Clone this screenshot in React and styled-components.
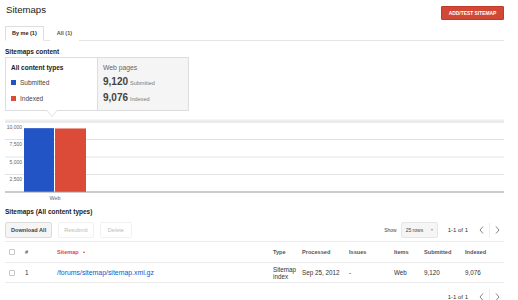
import React from 'react';
import styled, { createGlobalStyle } from 'styled-components';

const GlobalStyle = createGlobalStyle`
  html, body { margin: 0; padding: 0; background: #fff; }
  body { font-family: "Liberation Sans", Arial, sans-serif; color: #222; }
  * { box-sizing: border-box; }
`;

const FONT = '"Liberation Sans", Arial, sans-serif';

const Page = styled.div`
  width: 518px;
  height: 300px;
  overflow: hidden;
  padding: 0 14px 0 5px;
`;

const Header = styled.header`
  display: flex;
  justify-content: space-between;
  align-items: flex-start;
  height: 26px;
  padding-top: 4px;
`;

const Title = styled.h1`
  margin: 0;
  padding-left: 1px;
  font-size: 9.6px;
  line-height: 12px;
  font-weight: normal;
  color: #222;
`;

const PrimaryButton = styled.button`
  margin-top: 2px;
  height: 14px;
  width: 63px;
  padding: 0;
  background: #d14836;
  border: 1px solid #c23a28;
  border-radius: 1px;
  color: #fff;
  font: bold 4.9px ${FONT};
  text-transform: uppercase;
  white-space: nowrap;
`;

const TabBar = styled.div`
  display: flex;
  height: 15px;
  border-bottom: 1px solid #e5e5e5;
`;

const Tab = styled.div`
  height: 15px;
  padding: 0 6px;
  margin-right: 6px;
  font-size: 5.5px;
  font-weight: bold;
  line-height: 13px;
  color: ${p => (p.$active ? '#222' : '#555')};
  border: 1px solid ${p => (p.$active ? '#ddd' : 'transparent')};
  border-bottom: 1px solid ${p => (p.$active ? '#fff' : 'transparent')};
  background: #fff;
`;

const SectionTitle = styled.h2`
  margin: 0;
  padding-top: ${p => p.$top}px;
  font-size: 6.5px;
  line-height: 10px;
  font-weight: bold;
  color: #222;
`;

const Summary = styled.div`
  display: flex;
  width: 184px;
  height: 54px;
  border: 1px solid #ddd;
`;

const LegendPanel = styled.div`
  position: relative;
  width: 91px;
  padding: 4px 0 0 5px;
  background: #fff;

  &::before,
  &::after {
    content: '';
    position: absolute;
    left: 41px;
    width: 0;
    height: 0;
    border-left: 5px solid transparent;
    border-right: 5px solid transparent;
  }
  &::before {
    bottom: -7px;
    border-top: 6px solid #ddd;
  }
  &::after {
    bottom: -5.6px;
    border-top: 6px solid #fff;
  }
`;

const PanelHeading = styled.div`
  font-size: ${p => (p.$muted ? '6.8px' : '6.5px')};
  font-weight: ${p => (p.$muted ? 'normal' : 'bold')};
  color: ${p => (p.$muted ? '#666' : '#222')};
  line-height: 12px;
`;

const LegendItem = styled.div`
  display: flex;
  align-items: center;
  gap: 4px;
  height: 16px;
  font-size: 6.5px;
  color: #444;
`;

const Swatch = styled.span`
  width: 5px;
  height: 5px;
  background: ${p => p.$color};
`;

const StatsPanel = styled.div`
  flex: 1;
  padding: 4px 0 0 5px;
  background: #f5f5f5;
  border-left: 1px solid #ddd;
`;

const StatRow = styled.div`
  display: flex;
  align-items: baseline;
  gap: 2px;
  height: 16px;
  line-height: 15px;
`;

const BigNum = styled.span`
  font-size: 10px;
  font-weight: bold;
  color: #444;
`;

const StatLabel = styled.span`
  font-size: 5.5px;
  color: #777;
`;

const ChartWrap = styled.div`
  margin-top: 8px;
  height: 84px;
`;

const Toolbar = styled.div`
  display: flex;
  justify-content: space-between;
  align-items: center;
  margin-top: 5px;
  height: 16px;
`;

const ButtonGroup = styled.div`
  display: flex;
  gap: 6px;
  height: 16px;
`;

const ActionButton = styled.button`
  min-width: 32px;
  height: 16px;
  padding: 0 5px;
  border-radius: 2px;
  border: 1px solid ${p => (p.disabled ? '#f1f1f1' : '#dcdcdc')};
  background: ${p => (p.disabled ? '#fff' : '#f5f5f5')};
  color: ${p => (p.disabled ? '#bbb' : '#444')};
  font: ${p => (p.disabled ? 'normal' : 'bold')} 5.6px ${FONT};
  white-space: nowrap;
`;

const Pager = styled.div`
  display: flex;
  align-items: center;
  justify-content: flex-end;
  height: 15px;
  margin-top: ${p => p.$top || 0}px;
`;

const ShowLabel = styled.span`
  font-size: 5px;
  color: #444;
  margin-right: 4px;
`;

const RowsSelect = styled.div`
  display: flex;
  align-items: center;
  justify-content: space-between;
  width: 37px;
  height: 16px;
  padding: 0 4px;
  margin-right: 10px;
  background: #f5f5f5;
  border: 1px solid #e6e6e6;
  border-radius: 2px;
  font-size: 5px;
  color: #444;
`;

const Caret = styled.span`
  width: 0;
  height: 0;
  border-left: 1.5px solid transparent;
  border-right: 1.5px solid transparent;
  border-top: 2px solid #999;
`;

const RangeText = styled.span`
  font-size: 6px;
  color: #333;
  margin-right: 6px;
`;

const NavGroup = styled.div`
  display: flex;
  align-items: center;
  height: 15px;
`;

const NavButton = styled.button`
  display: flex;
  align-items: center;
  justify-content: center;
  width: 15px;
  height: 15px;
  padding: 0;
  background: none;
  border: none;
  border-left: ${p => (p.$divided ? '1px solid #eee' : 'none')};
`;

const Table = styled.div`
  margin-top: 3px;
  border-top: 1px solid #ececec;
`;

const Row = styled.div`
  display: grid;
  grid-template-columns: 20px 32px 216px 29px 47px 45px 30px 41px 39px;
  align-items: center;
  height: ${p => (p.$head ? 21 : 20)}px;
  border-bottom: 1px solid #ebebeb;
`;

const HeadCell = styled.div`
  font-size: 5.6px;
  font-weight: bold;
  color: ${p => (p.$sorted ? '#dd4b39' : '#555')};
  display: flex;
  align-items: center;
  gap: 4px;
`;

const Cell = styled.div`
  font-size: 6.3px;
  line-height: 7px;
  color: #333;
`;

const Link = styled.a`
  font-size: 6.9px;
  color: #1155cc;
  text-decoration: none;
`;

const CheckBox = styled.span`
  display: block;
  margin-left: 4px;
  width: 6px;
  height: 6px;
  border: 1px solid #c6c6c6;
  border-radius: 1px;
  background: #fff;
`;

const SortArrow = styled.span`
  width: 0;
  height: 0;
  border-left: 1.5px solid transparent;
  border-right: 1.5px solid transparent;
  border-bottom: 2px solid #dd4b39;
`;

const Chevron = ({ dir }) => (
  <svg width="5" height="8" viewBox="0 0 5 8">
    <polyline
      points={dir === 'left' ? '4,0.5 1,4 4,7.5' : '1,0.5 4,4 1,7.5'}
      fill="none"
      stroke="#777"
      strokeWidth="0.9"
    />
  </svg>
);

const ticks = [
  { label: '10,000', y: 3 },
  { label: '7,500', y: 20.5 },
  { label: '5,000', y: 38 },
  { label: '2,500', y: 55.5 },
];

const Chart = () => {
  const base = 73;
  const scale = 70 / 10000;
  const bars = [
    { x: 19, w: 30, v: 9120, color: '#2254c5' },
    { x: 50, w: 31, v: 9076, color: '#dc4a38' },
  ];
  return (
    <svg width="499" height="84" style={{ display: 'block' }}>
      <rect x="0" y="0.5" width="499" height="3" fill="#eeeeee" />
      {ticks.map(t => (
        <g key={t.label}>
          <line x1="0" x2="499" y1={t.y} y2={t.y} stroke="#e2e2e2" strokeWidth="1" />
          <text
            x="17"
            y={t.y + 6.5}
            textAnchor="end"
            fontSize="5"
            fill="#666"
            fontFamily={FONT}
          >
            {t.label}
          </text>
        </g>
      ))}
      {bars.map(b => (
        <rect
          key={b.x}
          x={b.x}
          y={base - b.v * scale}
          width={b.w}
          height={b.v * scale}
          fill={b.color}
        />
      ))}
      <line x1="0" x2="499" y1={base} y2={base} stroke="#999" strokeWidth="1" />
      <text x="50" y="80.5" textAnchor="middle" fontSize="5.5" fill="#666" fontFamily={FONT}>
        Web
      </text>
    </svg>
  );
};

const Pagination = () => (
  <>
    <RangeText>1-1 of 1</RangeText>
    <NavGroup>
      <NavButton aria-label="Previous">
        <Chevron dir="left" />
      </NavButton>
      <NavButton $divided aria-label="Next">
        <Chevron dir="right" />
      </NavButton>
    </NavGroup>
  </>
);

export default function App() {
  return (
    <Page>
      <GlobalStyle />
      <Header>
        <Title>Sitemaps</Title>
        <PrimaryButton>Add/Test Sitemap</PrimaryButton>
      </Header>

      <TabBar>
        <Tab $active>By me (1)</Tab>
        <Tab>All (1)</Tab>
      </TabBar>

      <SectionTitle $top={6}>Sitemaps content</SectionTitle>

      <Summary>
        <LegendPanel>
          <PanelHeading>All content types</PanelHeading>
          <LegendItem>
            <Swatch $color="#2254c5" />
            Submitted
          </LegendItem>
          <LegendItem>
            <Swatch $color="#dc4a38" />
            Indexed
          </LegendItem>
        </LegendPanel>
        <StatsPanel>
          <PanelHeading $muted>Web pages</PanelHeading>
          <StatRow>
            <BigNum>9,120</BigNum>
            <StatLabel>Submitted</StatLabel>
          </StatRow>
          <StatRow>
            <BigNum>9,076</BigNum>
            <StatLabel>Indexed</StatLabel>
          </StatRow>
        </StatsPanel>
      </Summary>

      <ChartWrap>
        <Chart />
      </ChartWrap>

      <SectionTitle $top={4}>Sitemaps (All content types)</SectionTitle>

      <Toolbar>
        <ButtonGroup>
          <ActionButton>Download All</ActionButton>
          <ActionButton disabled>Resubmit</ActionButton>
          <ActionButton disabled>Delete</ActionButton>
        </ButtonGroup>
        <Pager>
          <ShowLabel>Show</ShowLabel>
          <RowsSelect>
            25 rows <Caret />
          </RowsSelect>
          <Pagination />
        </Pager>
      </Toolbar>

      <Table>
        <Row $head>
          <CheckBox />
          <HeadCell>#</HeadCell>
          <HeadCell $sorted>
            Sitemap <SortArrow />
          </HeadCell>
          <HeadCell>Type</HeadCell>
          <HeadCell>Processed</HeadCell>
          <HeadCell>Issues</HeadCell>
          <HeadCell>Items</HeadCell>
          <HeadCell>Submitted</HeadCell>
          <HeadCell>Indexed</HeadCell>
        </Row>
        <Row>
          <CheckBox />
          <Cell>1</Cell>
          <Cell>
            <Link href="#">/forums/sitemap/sitemap.xml.gz</Link>
          </Cell>
          <Cell>
            Sitemap
            <br />
            index
          </Cell>
          <Cell>Sep 25, 2012</Cell>
          <Cell>-</Cell>
          <Cell>Web</Cell>
          <Cell>9,120</Cell>
          <Cell>9,076</Cell>
        </Row>
      </Table>

      <Pager $top={6}>
        <Pagination />
      </Pager>
    </Page>
  );
}
